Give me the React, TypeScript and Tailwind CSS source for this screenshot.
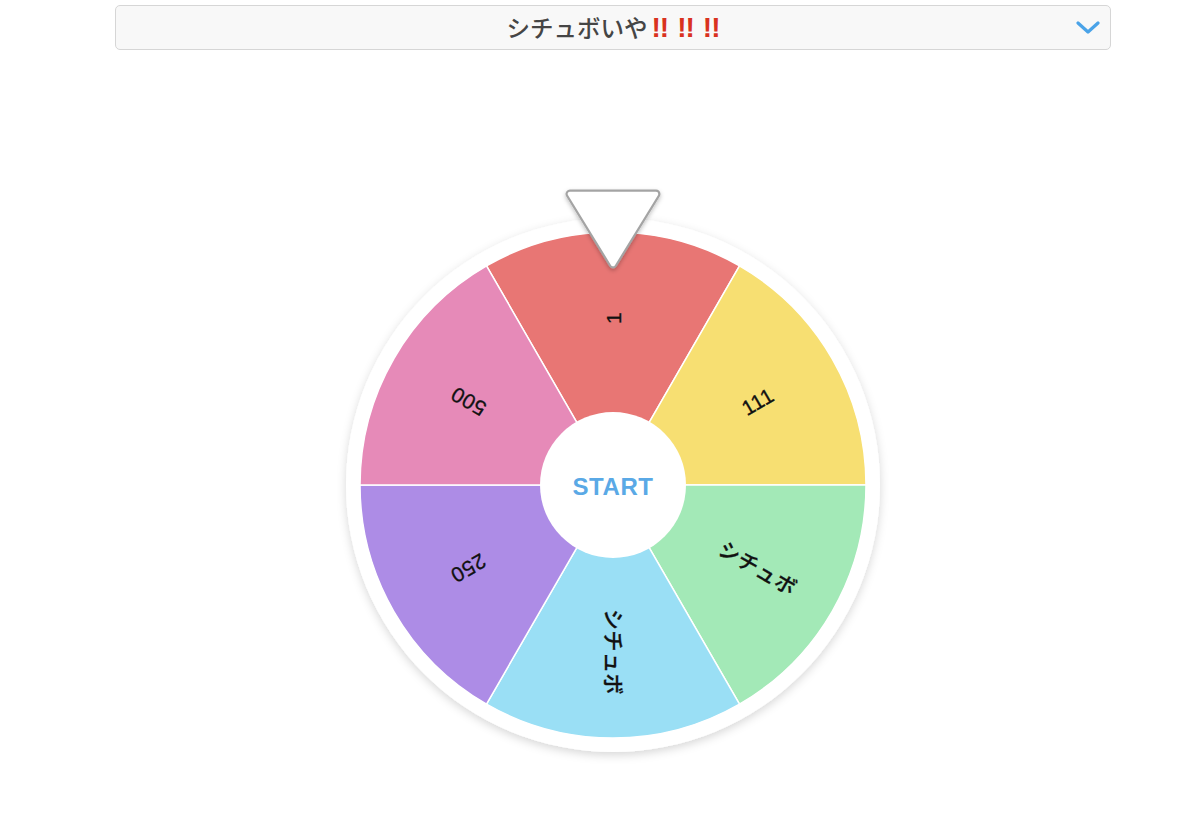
import React from "react";

const CX = 300;
const CY = 300;
const R = 253;
const LABEL_R = 167;

const segments = [
  { label: "1", color: "#e87674" },
  { label: "111", color: "#f7df72" },
  { label: "シチュボ", color: "#a3e9b7" },
  { label: "シチュボ", color: "#9adff5" },
  { label: "250", color: "#ad8ce6" },
  { label: "500", color: "#e68ab8" },
];

function pt(angleDeg: number, r: number) {
  const a = (angleDeg * Math.PI) / 180;
  return [CX + r * Math.sin(a), CY - r * Math.cos(a)];
}

function Wheel() {
  return (
    <svg width={600} height={600} viewBox="0 0 600 600">
      <defs>
        <filter id="ringShadow" x="-20%" y="-20%" width="140%" height="140%">
          <feDropShadow dx="0" dy="3" stdDeviation="5" floodColor="#000" floodOpacity="0.16" />
        </filter>
        <filter id="ptrShadow" x="-30%" y="-30%" width="160%" height="160%">
          <feDropShadow dx="0" dy="2" stdDeviation="2" floodColor="#000" floodOpacity="0.25" />
        </filter>
      </defs>
      <circle cx={CX} cy={CY} r={267} fill="#ffffff" filter="url(#ringShadow)" />
      {segments.map((s, i) => {
        const a0 = -30 + 60 * i;
        const a1 = a0 + 60;
        const [x0, y0] = pt(a0, R);
        const [x1, y1] = pt(a1, R);
        return (
          <path
            key={"p" + i}
            d={`M ${CX} ${CY} L ${x0} ${y0} A ${R} ${R} 0 0 1 ${x1} ${y1} Z`}
            fill={s.color}
            stroke="#ffffff"
            strokeWidth={1.5}
            strokeLinejoin="round"
          />
        );
      })}
      {segments.map((s, i) => {
        const a = 60 * i;
        const [x, y] = pt(a, LABEL_R);
        return (
          <text
            key={"t" + i}
            x={x}
            y={y}
            transform={`rotate(${a - 90} ${x} ${y})`}
            textAnchor="middle"
            dominantBaseline="central"
            fill="#111111"
            fontSize={21}
            fontWeight={500}
            letterSpacing={0.5}
            fontFamily='"Liberation Sans", "Noto Sans CJK JP", sans-serif'
            stroke="#111111"
            strokeWidth={0.3}
          >
            {s.label}
          </text>
        );
      })}
      <circle cx={CX} cy={CY} r={73} fill="#ffffff" />
      <text
        x={CX}
        y={CY + 1}
        textAnchor="middle"
        dominantBaseline="central"
        fill="#5aa9e6"
        fontSize={24}
        fontWeight={700}
        letterSpacing={0.6}
        fontFamily='"Liberation Sans", Arial, sans-serif'
      >
        START
      </text>
      <g filter="url(#ptrShadow)">
        <polygon
          points="257,9 343,9 300,79"
          fill="#a4a4a4"
          stroke="#a4a4a4"
          strokeWidth={9}
          strokeLinejoin="round"
        />
        <polygon
          points="257,9 343,9 300,79"
          fill="#ffffff"
          stroke="#ffffff"
          strokeWidth={4.5}
          strokeLinejoin="round"
        />
      </g>
    </svg>
  );
}

export default function App() {
  return (
    <div className="min-h-screen bg-white">
      <div className="pt-[5px] pl-[115px]">
        <div className="w-[996px] h-[45px] rounded-[5px] border border-[#d6d6d6] bg-[#f8f8f8] grid grid-cols-[1fr_auto_1fr] items-center">
          <div />
          <div className="flex items-center font-['Noto_Sans_CJK_JP',sans-serif] text-[23.5px] font-medium text-[#454545] leading-none">
            <span>シチュボいや</span>
            <span className="ml-[4px] flex gap-[9px] text-[#d9321f] font-black font-['Liberation_Sans',sans-serif] text-[28px] tracking-[-1px]">
              <span>!!</span>
              <span>!!</span>
              <span>!!</span>
            </span>
          </div>
          <div className="flex justify-end pr-[10px]">
            <svg width="24" height="14" viewBox="0 0 24 14" fill="none">
              <path d="M2 2 L12 11 L22 2" stroke="#4aa3e8" strokeWidth="3.2" strokeLinecap="round" strokeLinejoin="round" />
            </svg>
          </div>
        </div>
        <div className="w-[996px] flex justify-center mt-[135px]">
          <Wheel />
        </div>
      </div>
    </div>
  );
}
